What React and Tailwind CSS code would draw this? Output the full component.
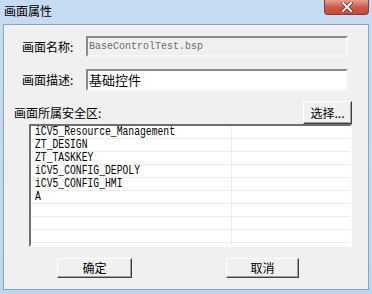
import React from "react";

const cjk = { fontFamily: '"Noto Sans CJK SC", "Noto Sans", sans-serif' };
const mono = { fontFamily: '"Liberation Mono", "DejaVu Sans Mono", monospace' };

const zones = [
  "iCV5_Resource_Management",
  "ZT_DESIGN",
  "ZT_TASKKEY",
  "iCV5_CONFIG_DEPOLY",
  "iCV5_CONFIG_HMI",
  "A",
  "",
  "",
  "",
  "",
];

export default function App() {
  return (
    <div className="w-[372px] h-[294px] flex flex-col bg-gradient-to-b from-[#c5dcf3] to-[#bdd5ee] overflow-hidden" style={cjk}>
      {/* title bar */}
      <div className="h-[24px] flex items-start justify-between">
        <div className="pl-[4px] pt-[3px] text-[12px] leading-[16px] text-black">画面属性</div>
        <div className="mr-[3px] w-[45px] h-[15px] rounded-b-[4px] border border-t-0 border-[#8a3a3a] bg-gradient-to-b from-[#e3a092] via-[#cf5a4a] to-[#c24a3a] flex items-center justify-center">
          <svg width="12" height="10" viewBox="0 0 12 10">
            <path d="M2 1 L10 9 M10 1 L2 9" stroke="#5a1e1e" strokeWidth="3.2" strokeLinecap="square" />
            <path d="M2 1 L10 9 M10 1 L2 9" stroke="#ffffff" strokeWidth="2" strokeLinecap="square" />
          </svg>
        </div>
      </div>

      {/* client area */}
      <div className="flex-1 mx-[3px] mb-[4px] border border-[#8aa4c0] bg-[#f0f0f0] flex flex-col pt-[11px]">
        <div className="flex items-center h-[21px]">
          <div className="w-[82px] pl-[18px] text-[12px] text-black">画面名称:</div>
          <div className="w-[262px] h-[21px] border-2 border-t-[#8a8a8a] border-l-[#8a8a8a] border-r-[#f7f7f7] border-b-[#f7f7f7] bg-[#f0f0f0] flex items-center pl-[1px]">
            <span className="text-[10px] text-[#6d6d6d]" style={mono}>BaseControlTest.bsp</span>
          </div>
        </div>

        <div className="flex items-center h-[22px] mt-[12px]">
          <div className="w-[82px] pl-[18px] text-[12px] text-black">画面描述:</div>
          <div className="w-[262px] h-[22px] border-2 border-t-[#8a8a8a] border-l-[#8a8a8a] border-r-[#f7f7f7] border-b-[#f7f7f7] bg-white flex items-center pl-[1px]">
            <span className="text-[13px] leading-[14px] text-black">基础控件</span>
          </div>
        </div>

        <div className="flex items-end h-[23px] mt-[10px]">
          <div className="flex-1 pl-[10px] pb-[4px] text-[12px] leading-[14px] text-black">画面所属安全区:</div>
          <div className="mr-[16px] w-[49px] h-[23px] border border-t-[#ffffff] border-l-[#ffffff] border-r-[#404040] border-b-[#404040] shadow-[inset_-1px_-1px_0_#a0a0a0] bg-[#f0f0f0] flex items-center justify-center text-[12px] text-black">
            选择...
          </div>
        </div>

        <div className="ml-[25px] w-[323px] h-[123px] border-2 border-t-[#6e6e6e] border-l-[#6e6e6e] border-r-[#fdfdfd] border-b-[#fdfdfd] bg-white overflow-hidden">
          {zones.map((z, i) => (
            <div key={i} className="flex h-[13px] border-b border-[#ededed]">
              <div className="w-[201px] border-r border-[#ededed] pl-[4px] flex items-center whitespace-nowrap overflow-hidden">
                <span className="block origin-left scale-x-[0.81] text-[12px] leading-[12px] text-black" style={mono}>
                  {z}
                </span>
              </div>
              <div className="flex-1" />
            </div>
          ))}
        </div>

        <div className="flex mt-[11px]">
          <div className="ml-[53px] w-[75px] h-[20px] border border-t-[#ffffff] border-l-[#ffffff] border-r-[#404040] border-b-[#404040] shadow-[inset_-1px_-1px_0_#a0a0a0] bg-[#f0f0f0] flex items-center justify-center text-[12px] text-black">
            确定
          </div>
          <div className="ml-[94px] w-[73px] h-[20px] border border-t-[#ffffff] border-l-[#ffffff] border-r-[#404040] border-b-[#404040] shadow-[inset_-1px_-1px_0_#a0a0a0] bg-[#f0f0f0] flex items-center justify-center text-[12px] text-black">
            取消
          </div>
        </div>
      </div>
    </div>
  );
}
